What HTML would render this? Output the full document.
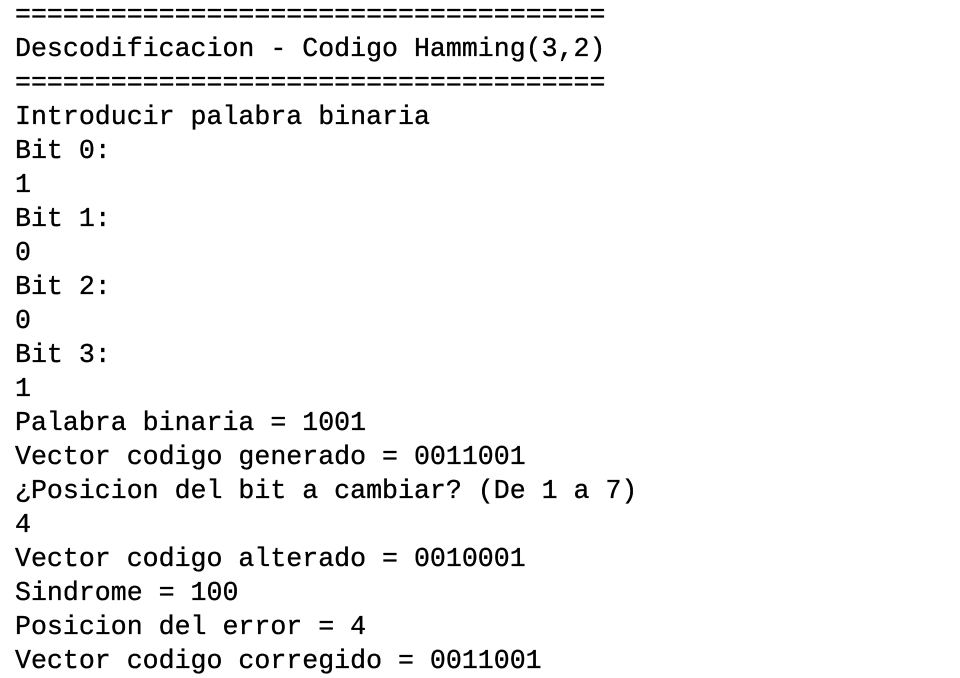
<!DOCTYPE html>
<html><head><meta charset="utf-8"><style>
html,body{margin:0;padding:0;background:#fff;width:960px;height:675px;overflow:hidden}
pre{margin:0;position:absolute;left:15px;top:-2px;font-family:"Liberation Mono",monospace;font-size:26.6px;line-height:34px;color:#000;letter-spacing:0;-webkit-text-stroke:0.35px #000}
</style></head><body><pre>=====================================
Descodificacion - Codigo Hamming(3,2)
=====================================
Introducir palabra binaria
Bit 0:
1
Bit 1:
0
Bit 2:
0
Bit 3:
1
Palabra binaria = 1001
Vector codigo generado = 0011001
¿Posicion del bit a cambiar? (De 1 a 7)
4
Vector codigo alterado = 0010001
Sindrome = 100
Posicion del error = 4
Vector codigo corregido = 0011001</pre></body></html>
